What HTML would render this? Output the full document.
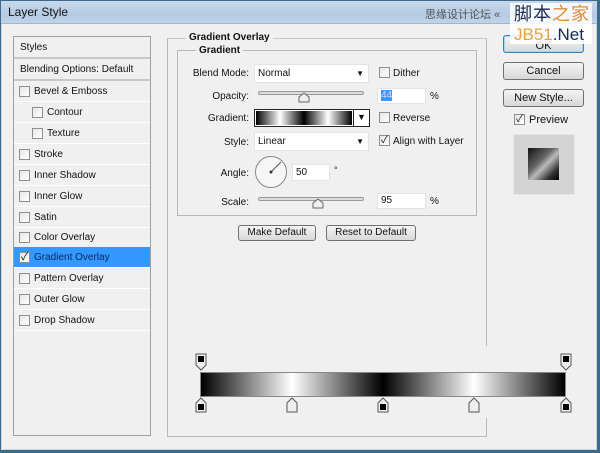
<!DOCTYPE html>
<html><head><meta charset="utf-8"><style>
*{margin:0;padding:0;box-sizing:border-box}
body{width:600px;height:453px;overflow:hidden;background:#3e6a8a;font-family:"Liberation Sans","Noto Sans CJK SC",sans-serif;font-size:10px;color:#111;position:relative}
.a{position:absolute}
.win{left:1px;top:1px;width:596px;height:449px;background:#f0f0f0;border:1px solid #c5d6e8}
.title{left:1px;top:1px;width:596px;height:23px;background:linear-gradient(#c8d9ec,#b4cbe3 60%,#c0d3e8);border-bottom:1px solid #9fb6cf}
.panel{left:13px;top:36px;width:138px;height:400px;border:1px solid #a0a0a0;background:#f0f0f0}
.row{position:absolute;left:0;width:136px;height:21px;border-bottom:1px solid #fff;line-height:21px;padding-left:20px}
.cb{position:absolute;width:11px;height:11px;border:1px solid #8f8f8f;background:linear-gradient(135deg,#e6e6e6,#fff)}
.btn{position:absolute;border:1px solid #707070;border-radius:3px;background:linear-gradient(#f4f4f4,#e6e6e6 50%,#d8d8d8);text-align:center;font-size:11px}
.in{position:absolute;background:#fff;border:1px solid #e3e3e3;font-size:10px;padding-left:3px}
.lbl{position:absolute;text-align:right;width:70px}
.sl{position:absolute;height:4px;border:1px solid #999;border-radius:2px;background:#ddd}
.wm{z-index:10}
</style></head><body>
<div class="a win"></div>
<div class="a title"></div>
<div class="a" style="left:8px;top:5px;font-size:12px;color:#111">Layer Style</div>
<div class="a" style="left:425px;top:6px;font-size:11px;color:#555">思缘设计论坛 «</div>

<div class="a panel">
<div class="row" style="top:0;height:22px;padding-left:6px;border-bottom:2px solid #c8c8c8">Styles</div>
<div class="row" style="top:22px;height:22px;padding-left:6px;border-bottom:2px solid #c8c8c8">Blending Options: Default</div>
<div class="row" style="top:44px"><span class="cb" style="left:5px;top:5px"></span>Bevel &amp; Emboss</div>
<div class="row" style="top:65px;padding-left:33px"><span class="cb" style="left:18px;top:5px"></span>Contour</div>
<div class="row" style="top:86px;padding-left:33px"><span class="cb" style="left:18px;top:5px"></span>Texture</div>
<div class="row" style="top:107px"><span class="cb" style="left:5px;top:5px"></span>Stroke</div>
<div class="row" style="top:128px"><span class="cb" style="left:5px;top:5px"></span>Inner Shadow</div>
<div class="row" style="top:149px"><span class="cb" style="left:5px;top:5px"></span>Inner Glow</div>
<div class="row" style="top:170px"><span class="cb" style="left:5px;top:5px"></span>Satin</div>
<div class="row" style="top:190px"><span class="cb" style="left:5px;top:5px"></span>Color Overlay</div>
<div class="row" style="top:210px;background:#3399ff;color:#0a2a60"><span class="cb" style="left:5px;top:5px;font-size:10px;line-height:9px;text-align:center;color:#000">✓</span>Gradient Overlay</div>
<div class="row" style="top:231px"><span class="cb" style="left:5px;top:5px"></span>Pattern Overlay</div>
<div class="row" style="top:252px"><span class="cb" style="left:5px;top:5px"></span>Outer Glow</div>
<div class="row" style="top:273px"><span class="cb" style="left:5px;top:5px"></span>Drop Shadow</div>
</div>

<div class="a" style="left:167px;top:38px;width:320px;height:399px;border:1px solid #b8b8b8;border-top-color:#c8c8c8"></div>
<div class="a" style="left:480px;top:346px;width:10px;height:72px;background:#f0f0f0"></div>
<div class="a" style="left:186px;top:32px;background:#f0f0f0;padding:0 3px;font-weight:bold;font-size:10px">Gradient Overlay</div>
<div class="a" style="left:177px;top:50px;width:300px;height:166px;border:1px solid #b8b8b8"></div>
<div class="a" style="left:196px;top:45px;background:#f0f0f0;padding:0 3px;font-weight:bold;font-size:10px">Gradient</div>

<div class="lbl" style="left:179px;top:68px">Blend Mode:</div>
<div class="in" style="left:254px;top:64px;width:115px;height:19px;line-height:17px">Normal<span style="position:absolute;right:4px;top:0;font-size:8px">▼</span></div>
<span class="cb a" style="left:379px;top:67px"></span><div class="a" style="left:393px;top:68px">Dither</div>

<div class="lbl" style="left:179px;top:91px">Opacity:</div>
<div class="sl" style="left:258px;top:91px;width:106px"></div>
<svg class="a" style="left:298px;top:92px" width="12" height="11"><path d="M1 10V5L6 1L11 5V10Z" fill="#eee" stroke="#666"/></svg>
<div class="in" style="left:377px;top:88px;width:49px;height:16px;line-height:14px"><span style="background:#3399ff;color:#cde">44</span></div>
<div class="a" style="left:430px;top:91px">%</div>

<div class="lbl" style="left:179px;top:113px">Gradient:</div>
<div class="a" style="left:254px;top:109px;width:116px;height:18px;border:1px solid #222;background:#fff"></div>
<div class="a" style="left:256px;top:111px;width:96px;height:14px;background:linear-gradient(90deg,#000,#fff 25%,#000 50%,#fff 75%,#000)"></div>
<div class="a" style="left:353px;top:110px;width:16px;height:16px;border-left:1px solid #222;font-size:9px;text-align:center;line-height:15px">▼</div>
<span class="cb a" style="left:379px;top:112px"></span><div class="a" style="left:393px;top:113px">Reverse</div>

<div class="lbl" style="left:179px;top:137px">Style:</div>
<div class="in" style="left:254px;top:132px;width:115px;height:19px;line-height:17px">Linear<span style="position:absolute;right:4px;top:0;font-size:8px">▼</span></div>
<span class="cb a" style="left:379px;top:135px;font-size:10px;line-height:9px;text-align:center">✓</span><div class="a" style="left:393px;top:136px">Align with Layer</div>

<div class="lbl" style="left:179px;top:168px">Angle:</div>
<svg class="a" style="left:254px;top:155px" width="34" height="34"><circle cx="17" cy="17" r="15.5" fill="#f6f6f6" stroke="#888"/><line x1="17" y1="17" x2="27" y2="7" stroke="#555"/><circle cx="17" cy="17" r="1.5" fill="#333"/></svg>
<div class="in" style="left:292px;top:164px;width:38px;height:17px;line-height:15px">50</div>
<div class="a" style="left:334px;top:165px;font-size:9px">°</div>

<div class="lbl" style="left:179px;top:197px">Scale:</div>
<div class="sl" style="left:258px;top:197px;width:106px"></div>
<svg class="a" style="left:312px;top:198px" width="12" height="11"><path d="M1 10V5L6 1L11 5V10Z" fill="#eee" stroke="#666"/></svg>
<div class="in" style="left:377px;top:193px;width:49px;height:16px;line-height:14px">95</div>
<div class="a" style="left:430px;top:196px">%</div>

<div class="btn" style="left:238px;top:225px;width:78px;height:16px;line-height:14px;font-size:10px">Make Default</div>
<div class="btn" style="left:326px;top:225px;width:90px;height:16px;line-height:14px;font-size:10px">Reset to Default</div>

<div class="btn" style="left:503px;top:35px;width:81px;height:18px;line-height:20px;border-color:#3c7fb1;box-shadow:inset 0 0 0 1px #9fd8f0">OK</div>
<div class="btn" style="left:503px;top:62px;width:81px;height:18px;line-height:16px">Cancel</div>
<div class="btn" style="left:503px;top:89px;width:81px;height:18px;line-height:16px">New Style...</div>
<span class="cb a" style="left:514px;top:114px;font-size:10px;line-height:9px;text-align:center">✓</span>
<div class="a" style="left:529px;top:114px;font-size:11px">Preview</div>
<div class="a" style="left:513px;top:134px;width:62px;height:61px;background:#d4d4d4;border:1px solid #e6e6e6"></div>
<div class="a" style="left:528px;top:148px;width:31px;height:32px;background:linear-gradient(135deg,#111,#666 40%,#bbb 55%,#333 80%,#000)"></div>

<div class="a" style="left:200px;top:372px;width:366px;height:25px;background:linear-gradient(90deg,#000,#fff 25%,#000 50%,#fff 75%,#000);border:1px solid #888"></div>
<svg class="a" style="left:194px;top:352px" width="380" height="62">
<g fill="#eee" stroke="#555">
<path d="M2 2H12V13L7 18L2 13Z"/><path d="M367 2H377V13L372 18L367 13Z"/>
<path d="M2 60V51L7 46L12 51V60Z"/><path d="M93 60V51L98 46L103 51V60Z"/><path d="M184 60V51L189 46L194 51V60Z"/><path d="M275 60V51L280 46L285 51V60Z"/><path d="M367 60V51L372 46L377 51V60Z"/>
</g>
<g fill="#000"><rect x="4" y="4" width="6" height="6"/><rect x="369" y="4" width="6" height="6"/><rect x="4" y="52" width="6" height="6"/><rect x="186" y="52" width="6" height="6"/><rect x="369" y="52" width="6" height="6"/></g>
</svg>

<div class="a wm" style="left:510px;top:3px;width:82px;height:41px;background:rgba(255,255,255,0.85)"></div>
<div class="a wm" style="left:514px;top:3px;font-size:18px;line-height:22px;color:#1a2a50;letter-spacing:1px">脚本<span style="color:#e08a3a">之家</span></div>
<div class="a wm" style="left:514px;top:25px;font-size:17px;line-height:19px;color:#1a2a50"><span style="color:#e8a040">JB51</span>.Net</div>
</body></html>
